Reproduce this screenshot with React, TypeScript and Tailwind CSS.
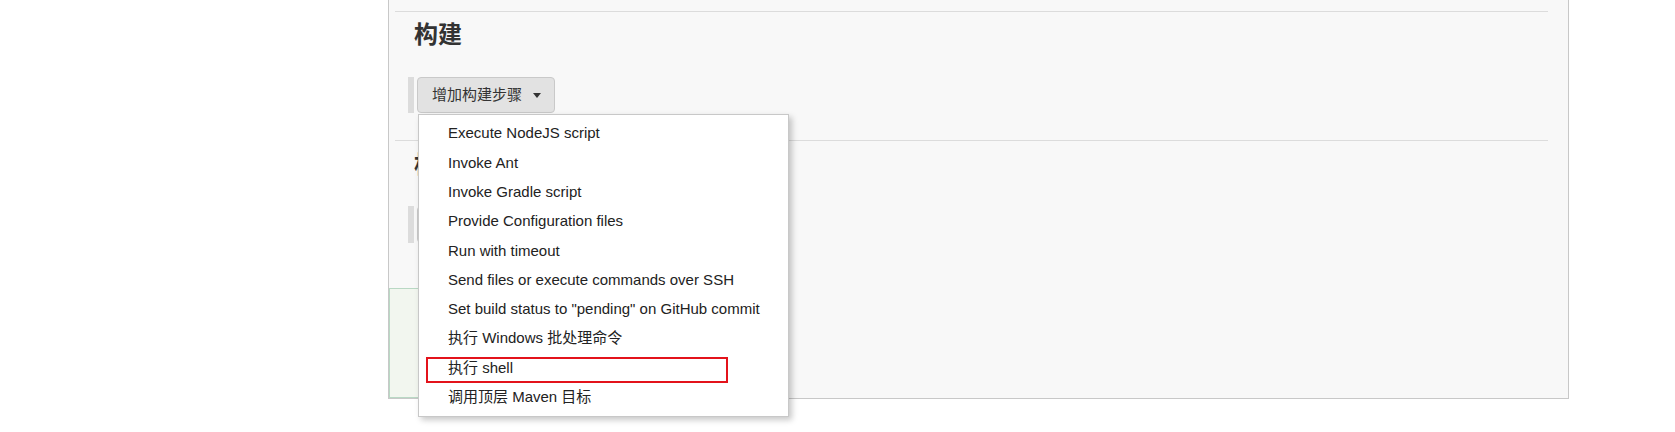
import React from "react";

const steps = [
  "Execute NodeJS script",
  "Invoke Ant",
  "Invoke Gradle script",
  "Provide Configuration files",
  "Run with timeout",
  "Send files or execute commands over SSH",
  'Set build status to "pending" on GitHub commit',
  "执行 Windows 批处理命令",
  "执行 shell",
  "调用顶层 Maven 目标",
];

const Caret: React.FC = () => (
  <span className="ml-[11px] inline-block h-0 w-0 border-x-[4px] border-t-[5px] border-x-transparent border-t-[#333]" />
);

const App: React.FC = () => {
  return (
    <div className="flex h-[432px] w-full bg-white font-['Liberation_Sans','Noto_Sans_CJK_SC',sans-serif] text-[#333]">
      <div className="w-[388px] shrink-0" />

      <div className="flex h-[399px] w-[1181px] flex-col border-x border-b border-[#c8c8c8] bg-[#f8f8f8]">
        <div className="h-[11px]" />

        {/* build section */}
        <section className="ml-[6px] mr-[20px] border-t border-[#dcdcdc]">
          <h2 className="mt-[7px] pl-[19px] text-[24px] font-bold leading-[32px] text-[#333]">
            构建
          </h2>
          <div className="relative ml-[13px] mt-[26px] flex h-[36px] border-l-[6px] border-[#dcdcdc] pl-[3px]">
            <button
              type="button"
              className="flex h-[36px] items-center rounded-[4px] border border-[#c9c9c9] bg-[#e2e2e2] pl-[14px] pr-[13px] text-[15px] text-[#333]"
            >
              增加构建步骤
              <Caret />
            </button>

            {/* open dropdown */}
            <ul className="absolute left-[4px] top-[37px] z-10 w-[371px] border border-[#c8c8c8] bg-white py-[4px] shadow-[3px_3px_6px_rgba(0,0,0,0.22)]">
              {steps.map((s) => (
                <li
                  key={s}
                  className="relative flex h-[29.3px] items-center whitespace-nowrap pl-[29px] text-[15px] text-[#222]"
                >
                  {s}
                  {s === "执行 shell" && (
                    <span className="absolute left-[7px] top-[4px] h-[26px] w-[302px] border-2 border-[#e3131b]" />
                  )}
                </li>
              ))}
            </ul>
          </div>
        </section>

        {/* post-build section */}
        <section className="ml-[6px] mr-[20px] mt-[27px] border-t border-[#dcdcdc]">
          <h2 className="mt-[8px] pl-[19px] text-[24px] font-bold leading-[32px] text-[#333]">
            构建后操作
          </h2>
          <div className="ml-[13px] mt-[25px] flex h-[37px] border-l-[6px] border-[#dcdcdc] pl-[3px]">
            <button
              type="button"
              className="flex h-[37px] items-center rounded-[4px] border border-[#c9c9c9] bg-[#e2e2e2] pl-[14px] pr-[13px] text-[15px] text-[#333]"
            >
              增加构建后操作步骤
              <Caret />
            </button>
          </div>
        </section>

        {/* bottom bar */}
        <div className="mt-auto h-[110px] w-[360px] border border-[#b9d8c4] bg-[#f2f6ef]" />
      </div>
    </div>
  );
};

export default App;
